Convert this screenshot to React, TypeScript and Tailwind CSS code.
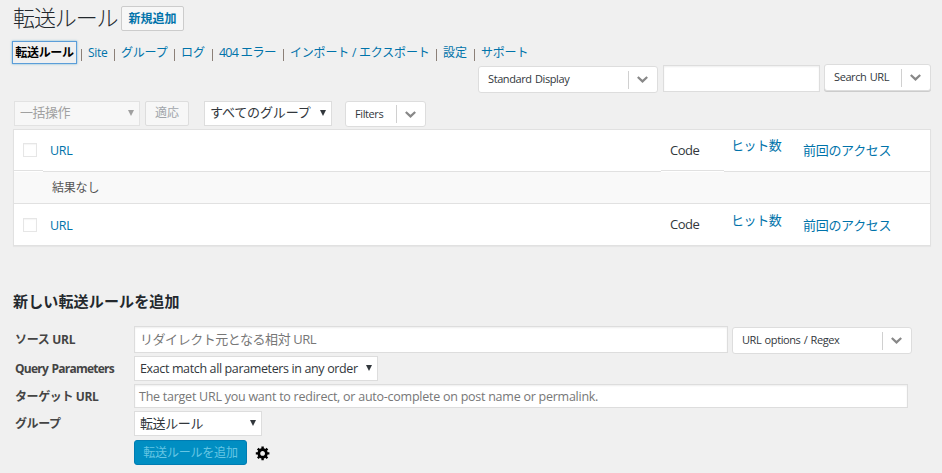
import React from "react";

const inset = "bg-white border border-[#ddd] shadow-[inset_0_1px_2px_rgba(0,0,0,0.07)]";

function Select({ className, children, disabled }: { className: string; children: React.ReactNode; disabled?: boolean }) {
  return (
    <div className={`flex shrink-0 items-center justify-between border pl-[5px] pr-[5px] whitespace-nowrap leading-none ${disabled ? "border-[#e2e2e2] bg-[#f7f7f7] text-[#a0a0a0]" : "border-[#ddd] bg-white text-[#32373c]"} ${className}`}>
      {children}
      <svg className="mb-[2px] h-[6px] w-[6px] shrink-0 fill-current" viewBox="0 0 6 6"><path d="M0 0h6L3 6z" /></svg>
    </div>
  );
}

function Dropdown({ className, children }: { className: string; children: React.ReactNode }) {
  return (
    <div className={`flex shrink-0 items-center rounded-[3px] border border-[#ddd] bg-white pl-[9px] text-[11px] whitespace-nowrap text-[#32373c] ${className}`}>
      <div className="mb-[2px] flex-1 tracking-[-0.4px] [word-spacing:0.8px]">{children}</div>
      <div className="flex h-[18px] w-[29px] items-center justify-center border-l border-[#d0d0d0]">
        <svg className="mr-[2px] h-[7px] w-[11px]" viewBox="0 0 11 7" fill="none" stroke="#888" strokeWidth="2.2"><path d="M.8 1l4.7 4.400L10.200 1" /></svg>
      </div>
    </div>
  );
}

function Check() {
  return <div className="ml-[9px] h-[14px] w-[14px] border border-[#e6e6e6] bg-white shadow-[inset_0_1px_1px_rgba(0,0,0,0.04)]" />;
}

function HeadRow({ header }: { header?: boolean }) {
  const line = header ? "h-[42px] border-b border-[#e1e1e1]" : "h-[41px] pt-[2px]";
  const shortLine = header ? "h-[41px] border-b border-[#e1e1e1]" : "h-[41px]";
  return (
    <div className={`flex items-start bg-white text-[13px] leading-none text-[#0073aa] ${header ? "h-[42px]" : "h-[41px]"}`}>
      <div className={`flex w-[29px] items-center ${shortLine}`}><Check /></div>
      <div className={`flex w-[618px] items-center pl-[7px] ${line}`}><span className="mt-px text-[12.5px] tracking-[-0.3px]">URL</span></div>
      <div className={`flex w-[63px] items-center pl-[9px] text-[#32373c] ${shortLine}`}><span className="tracking-[-0.5px]">Code</span></div>
      <div className={`w-[70px] pl-[7px] ${header ? "h-[42px] border-b border-[#e1e1e1] pt-[9px]" : "h-[41px] pt-[10px]"}`}><span className="tracking-[-0.4px]">ヒット数</span></div>
      <div className={`flex flex-1 items-center pl-[9px] ${line}`}><span className="tracking-[-0.3px]">前回のアクセス</span></div>
    </div>
  );
}

const nav = [
  { label: "Site", width: "w-[32px]", style: "text-[12px] tracking-[-0.3px]" },
  { label: "グループ", width: "w-[59px]", style: "text-[12px] tracking-[-0.2px]" },
  { label: "ログ", width: "w-[37px]", style: "text-[12px]" },
  { label: "404 エラー", width: "w-[70px]", style: "mt-[2px] text-[12.5px] tracking-[-0.8px]" },
  { label: "インポート / エクスポート", width: "w-[152px]", style: "text-[12px] tracking-[-0.2px]" },
  { label: "設定", width: "w-[37px]", style: "text-[12px]" },
  { label: "サポート", width: "w-[54px]", style: "text-[12px] tracking-[-0.2px]" },
];

export default function App() {
  return (
    <div className="h-[473px] w-[942px] overflow-hidden bg-[#f0f0f0] pl-[12px] font-['Open_Sans','Noto_Sans_CJK_JP',sans-serif] text-[13px] leading-none whitespace-nowrap text-[#444]">
      <div className="flex h-[41px] items-start pt-[6px]">
        <h1 className="-mt-px w-[109px] pl-px text-[22px] font-light leading-[24px] tracking-[-1.1px] text-[#23282d]">転送ルール</h1>
        <div className="flex h-[25px] w-[63px] items-center justify-center rounded-[2px] border border-[#ccc] bg-[#f7f7f7] text-[12px] font-bold text-[#0073aa]">新規追加</div>
      </div>
      <div className="flex h-[23px] items-center text-[#0073aa]">
        <div className="mr-[4px] flex h-[23px] w-[65px] items-center justify-center border border-[#5b9dd9] text-[12px] font-bold tracking-[-0.3px] text-black shadow-[0_0_2px_rgba(30,140,190,0.6)]">転送ルール</div>
        {nav.map((n) => (
          <React.Fragment key={n.label}>
            <span className="mt-[4px] h-[12px] w-px shrink-0 bg-[#8c8078]" />
            <span className={`shrink-0 pl-[6px] ${n.width} ${n.style}`}>{n.label}</span>
          </React.Fragment>
        ))}
      </div>
      <div className="flex h-[37px] pl-[466px]">
        <Dropdown className="mt-[2px] h-[27px] w-[180px]">Standard Display</Dropdown>
        <div className={`mt-px ml-[5px] h-[27px] w-[157px] ${inset}`} />
        <Dropdown className="ml-[4px] h-[27px] w-[107px] shadow-[0_1px_0_#ccc]">Search URL</Dropdown>
      </div>
      <div className="flex h-[28px] pl-[2px]">
        <Select disabled className="h-[25px] w-[126px] text-[13px]"><span className="-mt-[2px] tracking-[-0.5px]">一括操作</span></Select>
        <div className="ml-[5px] flex h-[25px] w-[44px] items-center justify-center rounded-[2px] border border-[#ddd] bg-[#f7f7f7] pb-px text-[12px] text-[#a0a5aa]">適応</div>
        <Select className="ml-[15px] h-[25px] w-[128px] text-[13px]"><span className="-mt-[2px] tracking-[-0.15px]">すべてのグループ</span></Select>
        <Dropdown className="ml-[13px] h-[26px] w-[81px]">Filters</Dropdown>
      </div>
      <div className="ml-px w-[918px] border border-[#e1e1e1] shadow-[0_1px_1px_rgba(0,0,0,0.04)]">
        <HeadRow header />
        <div className="flex h-[31px] items-center bg-[#f9f9f9] pl-[38px] text-[12px] text-[#555]"><span className="tracking-[-0.2px]">結果なし</span></div>
        <div className="border-t border-[#e1e1e1]"><HeadRow /></div>
      </div>
      <h2 className="mt-[42px] h-[38px] pt-[5px] pl-px text-[15px] font-bold leading-[16px] tracking-[0.15px] text-[#23282d]">新しい転送ルールを追加</h2>
      <div className="flex h-[30px]">
        <div className="w-[122px] pt-[8px] pl-[3px] text-[12px] font-bold tracking-[-0.3px]">ソース URL</div>
        <div className={`flex h-[27px] w-[594px] items-center pl-[5px] text-[#777] ${inset}`}><span className="tracking-[-0.45px]">リダイレクト元となる相対 URL</span></div>
        <Dropdown className="mt-px ml-[4px] h-[27px] w-[180px]">URL options / Regex</Dropdown>
      </div>
      <div className="flex h-[28px]">
        <div className="w-[122px] pt-[7px] pl-[3px] text-[12px] font-bold tracking-[-0.75px] [word-spacing:1px]">Query Parameters</div>
        <Select className="h-[25px] w-[244px]"><span className="mt-[2px] text-[12.5px] tracking-[-0.37px]">Exact match all parameters in any order</span></Select>
      </div>
      <div className="flex h-[27px]">
        <div className="w-[122px] pt-[7px] pl-[3px] text-[12px] font-bold tracking-[-0.4px]">ターゲット URL</div>
        <div className={`flex h-[24px] w-[774px] items-center pt-[3px] pl-[4px] text-[12.5px] tracking-[-0.25px] text-[#777] ${inset}`}>The target URL you want to redirect, or auto-complete on post name or permalink.</div>
      </div>
      <div className="flex h-[29px]">
        <div className="w-[122px] pt-[7px] pl-[3px] text-[12px] font-bold tracking-[-0.4px]">グループ</div>
        <Select className="h-[25px] w-[128px]"><span className="-mt-px tracking-[-0.4px]">転送ルール</span></Select>
      </div>
      <div className="flex items-center pl-[122px]">
        <div className="flex h-[25px] w-[113px] items-center justify-center rounded-[3px] border border-[#007cb2] bg-[#008ec2] text-[12px] tracking-[-0.2px] text-[#66c6e4]">転送ルールを追加</div>
        <svg className="mt-px ml-[8px] h-[16px] w-[16px] fill-black" viewBox="0 0 20 20"><path d="M18 12h-2.180c-.170.700-.440 1.350-.810 1.930l1.540 1.540-2.100 2.100-1.540-1.540c-.580.360-1.230.630-1.910.790V19H8v-2.180c-.680-.160-1.330-.430-1.910-.790l-1.540 1.540-2.120-2.120 1.540-1.540c-.360-.580-.630-1.230-.790-1.910H1V9.030h2.170c.160-.700.440-1.350.800-1.940L2.430 5.550l2.100-2.100 1.540 1.540c.580-.370 1.240-.640 1.930-.810V2h3v2.180c.680.160 1.330.430 1.910.790l1.540-1.540 2.120 2.120-1.540 1.540c.360.590.640 1.240.800 1.940H18V12zm-8.500 1.500c1.660 0 3-1.340 3-3s-1.340-3-3-3-3 1.340-3 3 1.340 3 3 3z" /></svg>
      </div>
    </div>
  );
}
